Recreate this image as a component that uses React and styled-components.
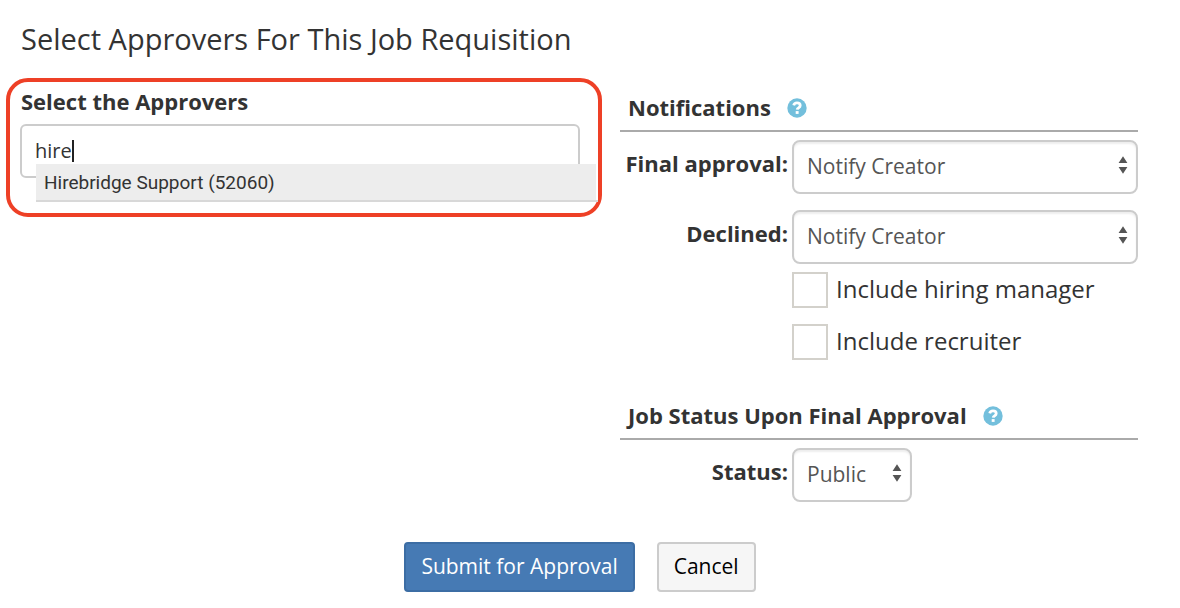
import React, { useState } from "react";
import styled, { createGlobalStyle } from "styled-components";

const GlobalStyle = createGlobalStyle`
  * { box-sizing: border-box; }
  body {
    margin: 0;
    background: #fff;
    color: #333;
    font-family: "Open Sans", "Liberation Sans", sans-serif;
    font-size: 24px;
    line-height: 32px;
  }
`;

const Page = styled.form`
  padding: 18px 42px 16px 6px;
`;

const Title = styled.h1`
  margin: 0 0 18px;
  padding-left: 15px;
  font-size: 29px;
  font-weight: 400;
  line-height: 42px;
`;

const Columns = styled.div`
  display: grid;
  grid-template-columns: minmax(0, 596fr) minmax(0, 518fr);
  column-gap: 18px;
  align-items: start;
`;

const ApproverBox = styled.section`
  display: flex;
  flex-direction: column;
  gap: 8px;
  padding: 4px 18px 35px 10px;
  border: 4px solid #ee4026;
  border-radius: 22px;
`;

const BoxLabel = styled.label`
  padding-left: 1px;
  font-size: 22px;
  font-weight: 700;
  line-height: 30px;
`;

const Combo = styled.div`
  position: relative;
`;

const SearchInput = styled.input`
  display: block;
  width: 100%;
  height: 54px;
  padding: 0 13px 2px;
  border: 2px solid #ccc;
  border-radius: 6px;
  outline: none;
  background: #fff;
  color: #333;
  font-family: inherit;
  font-size: 20px;
`;

const Caret = styled.span`
  position: absolute;
  top: 16px;
  left: 52px;
  width: 2px;
  height: 22px;
  background: #222;
`;

const Suggestions = styled.ul`
  position: absolute;
  top: 40px;
  left: 16px;
  right: -18px;
  margin: 0;
  padding: 0 2px 0 0;
  border-bottom: 2px solid #d8d8d8;
  background: #fff;
  list-style: none;
`;

const Suggestion = styled.li`
  padding: 0 8px;
  background: #ededed;
  font-family: Roboto, "Liberation Sans", sans-serif;
  font-size: 19px;
  line-height: 38px;
  height: 36px;
`;

const Settings = styled.div`
  display: flex;
  flex-direction: column;
  gap: 36px;
  padding-top: 10px;
`;

const Group = styled.section`
  display: flex;
  flex-direction: column;
`;

const GroupHeader = styled.header`
  display: flex;
  align-items: center;
  gap: 16px;
  height: 44px;
  margin-bottom: 8px;
  padding: 0 8px 4px;
  border-bottom: 2px solid #aaa;
`;

const GroupTitle = styled.h2`
  margin: 0;
  font-size: 22px;
  font-weight: 700;
  line-height: 30px;
`;

const HelpButton = styled.button`
  display: flex;
  padding: 2px 0 0;
  border: 0;
  background: none;
  cursor: pointer;
`;

const Field = styled.div`
  display: grid;
  grid-template-columns: 168px minmax(0, 1fr);
  column-gap: 4px;
  margin-bottom: ${(p) => (p.$last ? "0" : p.$tight ? "8px" : "16px")};
`;

const FieldLabel = styled.label`
  padding-top: 8px;
  font-size: 22px;
  font-weight: 700;
  line-height: 30px;
  text-align: right;
  white-space: nowrap;
`;

const SelectWrap = styled.div`
  position: relative;
  width: ${(p) => (p.$compact ? "120px" : "100%")};
`;

const SelectControl = styled.select`
  display: block;
  width: 100%;
  height: 54px;
  padding: 0 30px 2px 13px;
  border: 2px solid #ccc;
  border-radius: 8px;
  appearance: none;
  background: #fff;
  box-shadow: inset 0 2px 2px rgba(0, 0, 0, 0.07);
  color: #555;
  font-family: inherit;
  font-size: 21px;
`;

const ArrowIcon = styled.svg`
  position: absolute;
  top: 16px;
  right: 10px;
  pointer-events: none;
`;

const Checks = styled.div`
  display: flex;
  flex-direction: column;
  gap: 16px;
  padding-left: 172px;
`;

const CheckLabel = styled.label`
  display: flex;
  align-items: flex-start;
  gap: 8px;
  height: 36px;
  line-height: 34px;
`;

const CheckBox = styled.input`
  flex: none;
  width: 36px;
  height: 36px;
  margin: 0;
  border: 2px solid #d3d1cb;
  appearance: none;
  background: #fff;

  &:checked {
    background: #467ab4;
  }
`;

const Actions = styled.footer`
  display: flex;
  justify-content: center;
  gap: 22px;
  margin-top: 40px;
  padding-left: 16px;
`;

const ActionButton = styled.button`
  height: 50px;
  padding: 0 15px 2px;
  border: 2px solid ${(p) => (p.$primary ? "#3c6da4" : "#ccc")};
  border-radius: 4px;
  background: ${(p) => (p.$primary ? "#467ab4" : "#f6f6f6")};
  color: ${(p) => (p.$primary ? "#fff" : "#000")};
  font-family: inherit;
  font-size: 21px;
`;

function Help({ topic }) {
  return (
    <HelpButton type="button" aria-label={`Help: ${topic}`}>
      <svg width="20" height="20" viewBox="0 0 20 20" aria-hidden="true">
        <circle cx="10" cy="10" r="9.7" fill="#73bfdc" />
        <path
          d="M6.7 7.4C7.1 5.6 8.3 4.9 10 4.9c1.9 0 3.2 1 3.2 2.6 0 1.2-.7 1.8-1.6 2.4-.8.5-1.3.8-1.4 1.7"
          fill="none"
          stroke="#fff"
          strokeWidth="2.8"
        />
        <rect x="8.7" y="13.1" width="2.9" height="2.8" fill="#fff" />
      </svg>
    </HelpButton>
  );
}

function Picker({ id, compact, options }) {
  return (
    <SelectWrap $compact={compact}>
      <SelectControl id={id} defaultValue={options[0]}>
        {options.map((o) => (
          <option key={o}>{o}</option>
        ))}
      </SelectControl>
      <ArrowIcon width="10" height="18" viewBox="0 0 10 18" aria-hidden="true">
        <path d="M5 0.3L9.4 7H0.6ZM0.6 11H9.4L5 17.7Z" fill="#555" />
      </ArrowIcon>
    </SelectWrap>
  );
}

export default function App() {
  const [query, setQuery] = useState("hire");
  return (
    <Page onSubmit={(e) => e.preventDefault()}>
      <GlobalStyle />
      <Title>Select Approvers For This Job Requisition</Title>
      <Columns>
        <ApproverBox>
          <BoxLabel htmlFor="approvers">Select the Approvers</BoxLabel>
          <Combo>
            <SearchInput
              id="approvers"
              type="text"
              autoComplete="off"
              value={query}
              onChange={(e) => setQuery(e.target.value)}
            />
            <Caret />
            <Suggestions>
              <Suggestion>Hirebridge Support (52060)</Suggestion>
            </Suggestions>
          </Combo>
        </ApproverBox>
        <Settings>
          <Group>
            <GroupHeader>
              <GroupTitle>Notifications</GroupTitle>
              <Help topic="Notifications" />
            </GroupHeader>
            <Field>
              <FieldLabel htmlFor="final">Final approval:</FieldLabel>
              <Picker id="final" options={["Notify Creator"]} />
            </Field>
            <Field $tight>
              <FieldLabel htmlFor="declined">Declined:</FieldLabel>
              <Picker id="declined" options={["Notify Creator"]} />
            </Field>
            <Checks>
              <CheckLabel>
                <CheckBox type="checkbox" />
                Include hiring manager
              </CheckLabel>
              <CheckLabel>
                <CheckBox type="checkbox" />
                Include recruiter
              </CheckLabel>
            </Checks>
          </Group>
          <Group>
            <GroupHeader>
              <GroupTitle>Job Status Upon Final Approval</GroupTitle>
              <Help topic="Job Status Upon Final Approval" />
            </GroupHeader>
            <Field $last>
              <FieldLabel htmlFor="status">Status:</FieldLabel>
              <Picker id="status" compact options={["Public"]} />
            </Field>
          </Group>
        </Settings>
      </Columns>
      <Actions>
        <ActionButton type="submit" $primary>
          Submit for Approval
        </ActionButton>
        <ActionButton type="button">Cancel</ActionButton>
      </Actions>
    </Page>
  );
}
